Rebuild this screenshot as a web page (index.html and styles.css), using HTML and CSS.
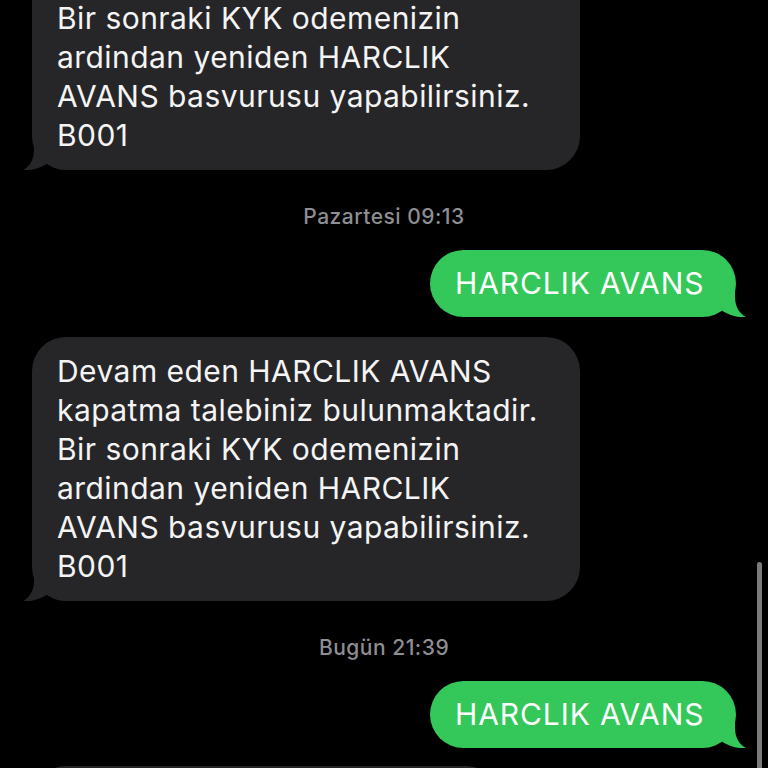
FILE: index.html
```html
<!DOCTYPE html>
<html lang="tr">
<head>
<meta charset="utf-8">
<title>Mesajlar</title>
<link rel="stylesheet" href="styles.css">
</head>
<body>
<div class="screen">
  <div class="thread">
    <div class="row row-in">
      <div class="bubble in">Devam eden HARCLIK AVANS<br>kapatma talebiniz bulunmaktadir.<br>Bir sonraki KYK odemenizin<br>ardindan yeniden HARCLIK<br>AVANS basvurusu yapabilirsiniz.<br>B001<svg class="tail tail-in" viewBox="0 0 30 34" width="30" height="34"><path d="M18 0 L18 14 C18 24 23 31 29 34 C22 35 11 32 5 27.5 Z"/></svg></div>
    </div>
    <div class="stamp">Pazartesi 09:13</div>
    <div class="row row-out">
      <div class="bubble out">HARCLIK AVANS<svg class="tail tail-out" viewBox="0 0 30 34" width="30" height="34"><path d="M18 0 L18 14 C18 24 23 31 29 34 C22 35 11 32 5 27.5 Z"/></svg></div>
    </div>
    <div class="row row-in gap-s">
      <div class="bubble in">Devam eden HARCLIK AVANS<br>kapatma talebiniz bulunmaktadir.<br>Bir sonraki KYK odemenizin<br>ardindan yeniden HARCLIK<br>AVANS basvurusu yapabilirsiniz.<br>B001<svg class="tail tail-in" viewBox="0 0 30 34" width="30" height="34"><path d="M18 0 L18 14 C18 24 23 31 29 34 C22 35 11 32 5 27.5 Z"/></svg></div>
    </div>
    <div class="stamp">Bugün 21:39</div>
    <div class="row row-out">
      <div class="bubble out">HARCLIK AVANS<svg class="tail tail-out" viewBox="0 0 30 34" width="30" height="34"><path d="M18 0 L18 14 C18 24 23 31 29 34 C22 35 11 32 5 27.5 Z"/></svg></div>
    </div>
    <div class="row row-in gap-s2">
      <div class="bubble in short">Devam eden HARCLIK AVANS</div>
    </div>
  </div>
  <div class="scrollbar"></div>
</div>
</body>
</html>
```
FILE: styles.css
```css
html, body {
  margin: 0;
  padding: 0;
  background: #000;
}
.screen {
  position: relative;
  width: 768px;
  height: 768px;
  overflow: hidden;
  background: #000;
  font-family: Inter, "Liberation Sans", Arial, sans-serif;
}
.thread {
  display: flex;
  flex-direction: column;
  margin-top: -94px;
}
.row {
  display: flex;
}
.row-in {
  justify-content: flex-start;
  padding-left: 32px;
}
.row-out {
  justify-content: flex-end;
  padding-right: 32px;
}
.gap-s { margin-top: 20px; }
.gap-s2 { margin-top: 18px; }
.bubble {
  position: relative;
  font-size: 30px;
  line-height: 39px;
  color: #fff;
  letter-spacing: 0.45px;
}
.bubble.in {
  background: #262628;
  width: 548px;
  box-sizing: border-box;
  padding: 15px 16px 15px 25px;
  border-radius: 34px;
  color: #f4f4f4;
}
.bubble.in.short {
  width: 468px;
}
.bubble.out {
  background: #34c759;
  width: 306px;
  box-sizing: border-box;
  padding: 14px 20px 14px 25px;
  border-radius: 34px;
  letter-spacing: 0.9px;
}
.tail {
  position: absolute;
  bottom: 0;
}
.tail-out {
  right: -11px;
  fill: #34c759;
}
.tail-in {
  left: -10px;
  fill: #262628;
  transform: scaleX(-1);
}
.stamp {
  margin: 35px 0 21px;
  text-align: center;
  font-size: 21px;
  line-height: 24px;
  color: #8e8e93;
  font-weight: 500;
  letter-spacing: 0.5px;
}
.scrollbar {
  position: absolute;
  right: 6px;
  top: 562px;
  width: 5px;
  height: 220px;
  border-radius: 3px;
  background: #7b7b7b;
}
```
